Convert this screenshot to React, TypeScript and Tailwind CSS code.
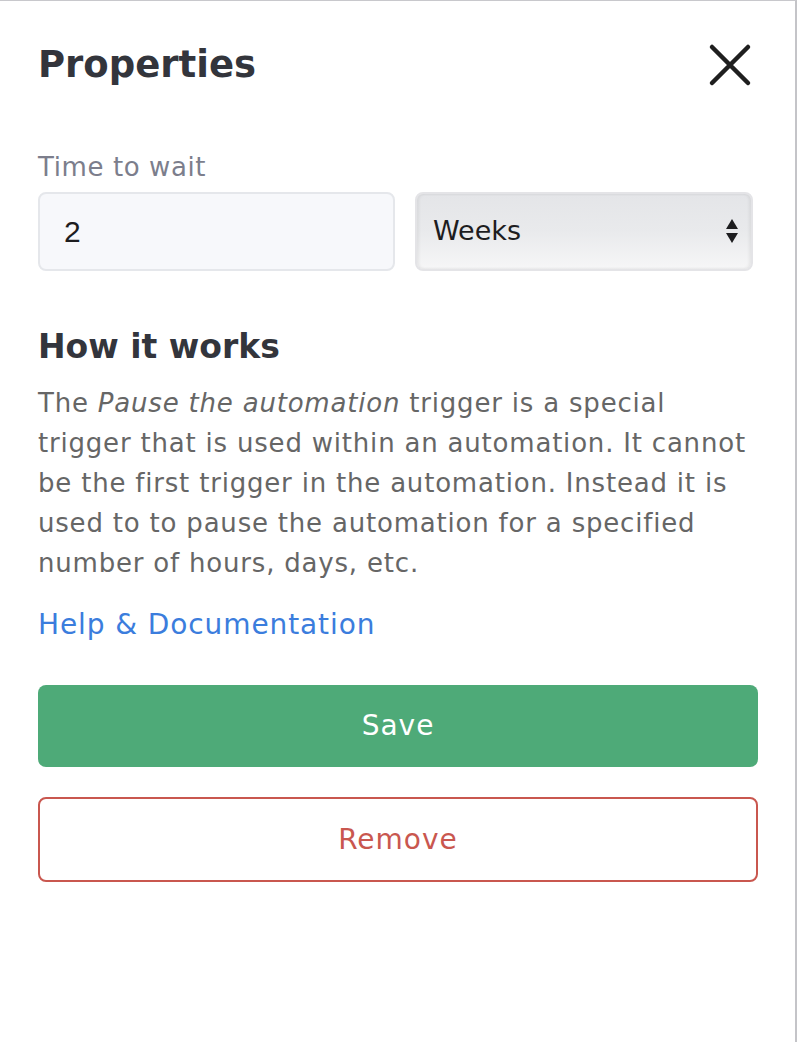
import React from "react";

export default function App() {
  return (
    <div className="w-[798px] h-[1042px] bg-white" style={{ fontFamily: '"DejaVu Sans", "Noto Sans", sans-serif' }}>
      <div className="w-[797px] h-[1042px] border-t border-t-[#c8c8cc] border-r-2 border-r-[#c4c4c8] bg-white pl-[38px] pr-[39px] pt-[40px]">
        <div className="flex items-center justify-between h-[48px]">
          <h1 className="text-[37px] font-bold text-[#33353c] leading-[48px] tracking-[0px]">Properties</h1>
          <svg width="44" height="44" viewBox="0 0 44 44" className="mr-[4px]">
            <path d="M4 4 L40 40 M40 4 L4 40" stroke="#1f1f1f" strokeWidth="4.5" strokeLinecap="round" />
          </svg>
        </div>

        <div className="mt-[62px] text-[26px] leading-[32px] text-[#7c7e8c] tracking-[0.6px]">Time to wait</div>
        <div className="flex gap-[20px] mt-[9px] w-[715px]">
          <div className="w-[357px] h-[79px] rounded-[8px] border-2 border-[#e5e7eb] bg-[#f7f8fb] flex items-center pl-[24px] text-[30px] text-[#1d1d1f]" style={{ fontFamily: '"Liberation Sans", Arial, sans-serif' }}>
            2
          </div>
          <div className="relative w-[338px] h-[79px] rounded-[8px] border-2 border-[#e4e4e7] bg-gradient-to-b from-[#e4e5e8] via-[#e9eaec] to-[#f6f6f7] flex items-center pl-[16px] text-[27px] text-[#1d1d1f] shadow-[inset_2px_0_3px_rgba(0,0,0,0.06),inset_-2px_0_3px_rgba(0,0,0,0.06)]">
            Weeks
            <svg width="14" height="26" viewBox="0 0 14 26" className="absolute right-[12px] top-[24px]">
              <path d="M7 1 L13 11 L1 11 Z" fill="#1d1d1f" />
              <path d="M1 15 L13 15 L7 25 Z" fill="#1d1d1f" />
            </svg>
          </div>
        </div>

        <h2 className="mt-[56px] text-[33px] font-bold text-[#33353c] leading-[40px]">How it works</h2>
        <p className="mt-[16px] text-[26px] leading-[40px] text-[#666666] tracking-[0.8px] whitespace-nowrap">
          The <em>Pause the automation</em> trigger is a special<br />
          trigger that is used within an automation. It cannot<br />
          be the first trigger in the automation. Instead it is<br />
          used to to pause the automation for a specified<br />
          number of hours, days, etc.
        </p>
        <div className="mt-[22px] text-[28px] leading-[40px] text-[#3b7ddd] tracking-[0.9px]">Help &amp; Documentation</div>

        <button className="mt-[40px] w-[720px] h-[82px] rounded-[8px] bg-[#4eaa78] text-white text-[28px] tracking-[1px] flex items-center justify-center">
          Save
        </button>
        <button className="mt-[30px] w-[720px] h-[85px] rounded-[8px] border-2 border-[#c9574f] bg-white text-[#c9574f] text-[28px] tracking-[1px] flex items-center justify-center">
          Remove
        </button>
      </div>
    </div>
  );
}
